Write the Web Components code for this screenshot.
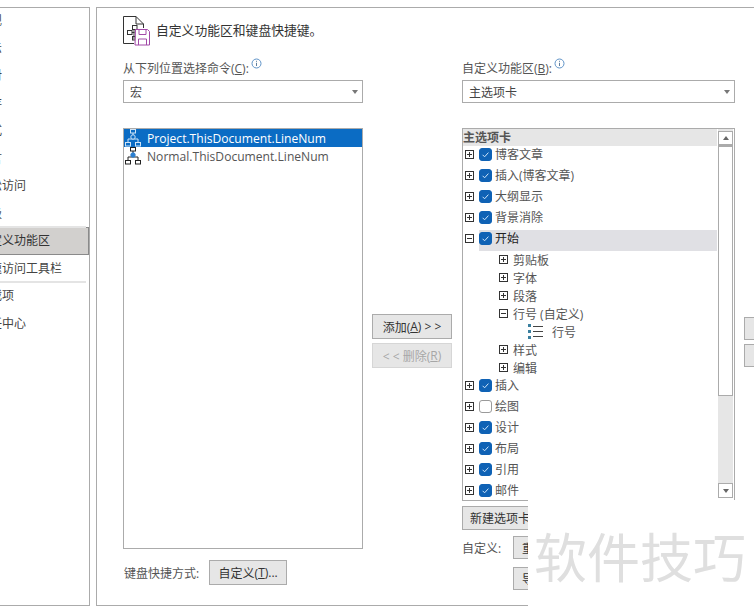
<!DOCTYPE html>
<html lang="zh">
<head>
<meta charset="utf-8">
<title>自定义功能区</title>
<style>
  html, body { margin: 0; height: 100%; background: #fff; overflow: hidden; }
  body { font: 12px "Open Sans", "Noto Sans CJK SC", sans-serif; color: #444; }
</style>
</head>
<body>
<options-dialog></options-dialog>

<script>
const FONT = `"Open Sans", "Noto Sans CJK SC", sans-serif`;

class OptionsNav extends HTMLElement {
  constructor() {
    super();
    this.attachShadow({ mode: 'open' }).innerHTML = `
      <style>
        :host { display: block; width: 112px; margin-left: -22px; box-sizing: border-box;
                border: 1px solid #ababab; border-left: 0; height: 599px; overflow: hidden; }
        .row { height: 27.5px; line-height: 27.5px; white-space: nowrap; color: #444; box-sizing: border-box; }
        .row.active { background: #d2d0ce; color: #333; outline: 1px solid #8a8a8a; outline-offset: -1px; }
        .sep { height: 2px; background: #e4e4e4; margin: -1px 3px -1px 0; position: relative; }
        .list { margin-top: -1px; }
      </style>
      <div class="list"></div>`;
    const items = ['常规', '显示', '校对', '保存', '版式', '语言', '轻松访问', '高级', '-', '自定义功能区', '快速访问工具栏', '-', '加载项', '信任中心'];
    const list = this.shadowRoot.querySelector('.list');
    items.forEach(txt => {
      const el = document.createElement('div');
      if (txt === '-') { el.className = 'sep'; list.append(el); return; }
      el.className = 'row' + (txt === '自定义功能区' ? ' active' : '');
      el.textContent = txt;
      list.append(el);
    });
  }
}

class InfoIcon extends HTMLElement {
  constructor() {
    super();
    this.attachShadow({ mode: 'open' }).innerHTML = `
      <style>:host { display: inline-block; width: 11px; height: 11px; vertical-align: 4px; margin-left: 2px; } svg { display: block; }</style>
      <svg width="11" height="11" viewBox="0 0 11 11" fill="none">
        <circle cx="5.5" cy="5.5" r="4.5" stroke="#5f93c8"/>
        <path d="M5.5 4.8V8" stroke="#5f7f9f"/>
        <path d="M5.5 2.8v1" stroke="#5f7f9f"/>
      </svg>`;
  }
}

class ComboBox extends HTMLElement {
  constructor() {
    super();
    this.attachShadow({ mode: 'open' }).innerHTML = `
      <style>
        :host { display: flex; align-items: center; height: 23px; box-sizing: border-box;
                border: 1px solid #ababab; background: #fff; padding: 0 4px 0 6px; color: #444; }
        .v { flex: 1; }
        i { width: 0; height: 0; border: 3.5px solid transparent; border-top: 4px solid #777; border-bottom: 0; }
      </style>
      <span class="v"><slot></slot></span><i></i>`;
  }
}

class PushButton extends HTMLElement {
  constructor() {
    super();
    this.attachShadow({ mode: 'open' }).innerHTML = `
      <style>
        :host { display: flex; align-items: center; justify-content: center; box-sizing: border-box; height: 25px;
                background: #e6e6e6; border: 1px solid #ababab; color: #333; white-space: nowrap; overflow: hidden; }
        :host([disabled]) { color: #a6a6a6; border-color: #d6d6d6; }
      </style>
      <slot></slot>`;
  }
}

class MacroRow extends HTMLElement {
  constructor() {
    super();
    const sel = this.hasAttribute('selected');
    const c = sel ? '#cfe4f7' : '#222';
    this.attachShadow({ mode: 'open' }).innerHTML = `
      <style>
        :host { display: flex; align-items: center; height: 18px; padding-left: 1px; color: #555; font-size: 12.1px; white-space: nowrap; }
        :host([selected]) { background: #0b6cc4; color: #fff; }
        svg { flex: none; margin-right: 6px; overflow: visible; }
      </style>
      <svg width="16" height="18" viewBox="0 0 16 18" fill="none">
        <rect x="5.5" y="0.5" width="5" height="3.5" stroke="${c}"/>
        <path d="M8 4v2M3 13v-3h10v3" stroke="${c}"/>
        <circle cx="8" cy="8" r="2.2" fill="${sel ? '#0b6cc4' : '#2b7fd0'}" stroke="${sel ? '#cfe4f7' : '#2b7fd0'}"/>
        <rect x="0.5" y="13.5" width="5" height="3.5" stroke="${c}"/>
        <rect x="10.5" y="13.5" width="5" height="3.5" stroke="${c}"/>
      </svg>
      <slot></slot>`;
  }
}

class TreeRow extends HTMLElement {
  constructor() {
    super();
    const kind = this.getAttribute('kind') || 'top';   // top | sub | leaf
    const exp = this.getAttribute('exp');              // plus | minus
    const chk = this.getAttribute('chk');              // on | off
    const box = exp ? `
      <svg class="exp" width="9" height="9" viewBox="0 0 9 9" fill="none">
        <rect x=".5" y=".5" width="8" height="8" stroke="#333"/>
        <path d="M2 4.5h5${exp === 'plus' ? 'M4.5 2v5' : ''}" stroke="#333"/>
      </svg>` : '';
    const check = chk === 'on' ? `
      <span class="chk on"><svg width="13" height="13" viewBox="0 0 13 13" fill="none"><path d="M3.6 6.8l2 2 3.8-4.2" stroke="#cfe6fb" stroke-width="1"/></svg></span>`
      : chk === 'off' ? `<span class="chk"></span>` : '';
    const leaf = kind === 'leaf' ? `
      <svg class="lines" width="16" height="15" viewBox="0 0 16 15">
        <path d="M0 0h3v3H0zM0 6h3v3H0zM0 12h3v3H0z" fill="#3a7f9f"/>
        <path d="M5 2.5h10M5 7.5h10M5 12.5h10" stroke="#444"/>
      </svg>` : '';
    this.attachShadow({ mode: 'open' }).innerHTML = `
      <style>
        :host { display: flex; align-items: center; height: 21px; white-space: nowrap; color: #555; }
        :host([kind=sub]), :host([kind=leaf]) { height: 18px; }
        :host([kind=sub]) { padding-left: 36px; }
        :host([kind=leaf]) { padding-left: 65px; }
        :host([kind=top]) { padding-left: 2px; }
        :host([active]) { color: #222; }
        .exp { flex: none; margin-right: 5px; }
        :host([kind=top]) .exp { margin-bottom: 5px; }
        :host([kind=sub]) .exp { margin-top: -2px; }
        .body { display: flex; align-items: center; flex: 1; height: 100%; box-sizing: border-box; }
        :host([kind=top]) .body { padding-bottom: 5px; }
        :host([active]) .body { background: #e0e0e4; }
        .chk { flex: none; width: 13px; height: 13px; border-radius: 3px; box-sizing: border-box;
               border: 1px solid #9a9a9a; background: #fff; margin-right: 3px; display: block; }
        .chk.on { background: #0f62b5; border-color: #0f62b5; }
        .chk svg { display: block; margin: -1px; }
        .lines { margin-right: 8px; margin-top: -2px; }
      </style>
      ${box}<div class="body">${check}${leaf}<span class="txt"><slot></slot></span></div>`;
  }
}

class RibbonTree extends HTMLElement {
  constructor() {
    super();
    this.attachShadow({ mode: 'open' }).innerHTML = `
      <style>
        :host { display: block; box-sizing: border-box; height: 373px; border: 1px solid #ababab; background: #fff; overflow: hidden; }
        .wrap { display: grid; grid-template-columns: 1fr 15px; height: 100%; column-gap: 1px; padding-right: 1px; box-sizing: border-box; }
        .items { overflow: hidden; }
        .head { height: 17px; line-height: 17px; background: #e6e6e6; color: #555; font-weight: 600; }
        .bar { background: #e6e6e6; display: flex; flex-direction: column; padding-top: 2px; box-sizing: border-box; height: 369px; }
        .btn { height: 15px; box-sizing: border-box; border: 1px solid #ababab; background: #fff; display: flex; align-items: center; justify-content: center; flex: none; }
        .up { border-width: 1px 1px 2px; }
        .thumb { height: 250px; background: #fff; border: 1px solid #ababab; box-sizing: border-box; flex: none; }
        .sp { flex: 1; }
        i { width: 0; height: 0; border: 3.5px solid transparent; }
        .up i { border-bottom: 4px solid #666; border-top: 0; }
        .dn i { border-top: 4px solid #666; border-bottom: 0; }
      </style>
      <div class="wrap">
        <div class="items">
          <div class="head">主选项卡</div>
          <div class="rows"><slot></slot></div>
        </div>
        <div class="bar">
          <div class="btn up"><i></i></div>
          <div class="thumb"></div>
          <div class="sp"></div>
          <div class="btn dn"><i></i></div>
        </div>
      </div>`;
  }
}

class HeaderIcon extends HTMLElement {
  constructor() {
    super();
    this.attachShadow({ mode: 'open' }).innerHTML = `
      <style>:host { display: block; width: 28px; height: 30px; flex: none; } svg { display: block; }</style>
      <svg width="28" height="30" viewBox="0 0 28 30" fill="none">
        <path d="M11 27.5H.5V.5H13L20.5 8v4" stroke="#333"/>
        <path d="M13 .5V8h7.5" stroke="#333"/>
        <rect x="9.5" y="9.5" width="4.5" height="4" stroke="#333"/>
        <rect x="4.5" y="14.5" width="4.5" height="4" stroke="#333"/>
        <rect x="9.5" y="20.5" width="3" height="3.5" stroke="#333"/>
        <path d="M9 16.5h2.5M11 13.5v10" stroke="#333"/>
        <path d="M12.5 13.5h12l2 2v13.5h-14.5z" fill="#fff" stroke="#a24aa8"/>
        <path d="M16 13.5v5h7v-5M15.5 29v-6h8v6" stroke="#a24aa8"/>
      </svg>`;
  }
}

class WatermarkPatch extends HTMLElement {
  constructor() {
    super();
    this.attachShadow({ mode: 'open' }).innerHTML = `
      <style>
        :host { position: absolute; left: 528px; top: 500px; width: 226px; height: 112px; background: #fff; display: block; overflow: hidden; }
        div { position: absolute; left: 6px; top: 15px; font: 53px/80px "Noto Sans CJK SC", sans-serif; color: #dfdfdf; white-space: nowrap; }
      </style>
      <div>软件技巧</div>`;
  }
}

const tpl = document.createElement('template');
tpl.innerHTML = `
  <style>
    :host { display: flex; position: relative; width: 754px; height: 612px; overflow: hidden; background: #fff;
            padding-top: 7px; box-sizing: border-box; font-family: ${FONT}; font-size: 12px; color: #444; }
    options-nav { flex: none; }
    .panel { flex: none; margin-left: 6px; width: 720px; height: 599px; box-sizing: border-box; border: 1px solid #ababab; border-right: 0;
             padding: 8px 0 0 26px; overflow: hidden; }
    .title { display: flex; align-items: center; gap: 5px; height: 30px; color: #333; font-size: 12.8px; margin-bottom: 12px; }
    .title span { padding-bottom: 3px; }
    .cols { display: grid; grid-template-columns: 240px 81px 273px 40px; column-gap: 9px; }
    .col { display: flex; flex-direction: column; }
    .lbl { height: 22px; line-height: 18px; white-space: nowrap; color: #555; }
    .gap { height: 25px; }
    .list { height: 421px; box-sizing: border-box; border: 1px solid #ababab; background: #fff; }
    .foot { display: flex; align-items: center; margin-top: 11px; gap: 10px; padding-left: 1px; color: #555; }
    .foot push-button { width: 78px; }
    .mid { padding-top: 256px; gap: 4px; }
    .mid push-button { width: 80px; }
    .new { margin-top: 5px; height: 24px; width: 67px; justify-content: flex-start; padding-left: 7px; }
    .ctl { display: grid; grid-template-columns: 51px 16px; margin-top: 6px; align-items: center; row-gap: 8px; color: #555; }
    .ctl push-button { height: 23px; justify-content: flex-start; padding-left: 8px; }
    .side { padding-top: 259px; gap: 4px; }
    .side push-button { height: 23px; width: 40px; }
    u { text-underline-offset: 1px; }
  </style>
  <options-nav></options-nav>
  <section class="panel">
    <div class="title"><header-icon></header-icon><span>自定义功能区和键盘快捷键。</span></div>
    <div class="cols">
      <div class="col">
        <div class="lbl">从下列位置选择命令(<u>C</u>):<info-icon></info-icon></div>
        <combo-box>宏</combo-box>
        <div class="gap"></div>
        <div class="list">
          <macro-row selected>Project.ThisDocument.LineNum</macro-row>
          <macro-row>Normal.ThisDocument.LineNum</macro-row>
        </div>
        <div class="foot"><span>键盘快捷方式:</span><push-button>自定义(<u>T</u>)...</push-button></div>
      </div>
      <div class="col mid">
        <push-button>添加(<u>A</u>) &gt; &gt;</push-button>
        <push-button disabled>&lt; &lt; 删除(<u>R</u>)</push-button>
      </div>
      <div class="col">
        <div class="lbl">自定义功能区(<u>B</u>):<info-icon></info-icon></div>
        <combo-box>主选项卡</combo-box>
        <div class="gap"></div>
        <ribbon-tree>
          <tree-row kind="top" exp="plus" chk="on">博客文章</tree-row>
          <tree-row kind="top" exp="plus" chk="on">插入(博客文章)</tree-row>
          <tree-row kind="top" exp="plus" chk="on">大纲显示</tree-row>
          <tree-row kind="top" exp="plus" chk="on">背景消除</tree-row>
          <tree-row kind="top" exp="minus" chk="on" active>开始</tree-row>
          <tree-row kind="sub" exp="plus">剪贴板</tree-row>
          <tree-row kind="sub" exp="plus">字体</tree-row>
          <tree-row kind="sub" exp="plus">段落</tree-row>
          <tree-row kind="sub" exp="minus">行号 (自定义)</tree-row>
          <tree-row kind="leaf">行号</tree-row>
          <tree-row kind="sub" exp="plus">样式</tree-row>
          <tree-row kind="sub" exp="plus">编辑</tree-row>
          <tree-row kind="top" exp="plus" chk="on">插入</tree-row>
          <tree-row kind="top" exp="plus" chk="off">绘图</tree-row>
          <tree-row kind="top" exp="plus" chk="on">设计</tree-row>
          <tree-row kind="top" exp="plus" chk="on">布局</tree-row>
          <tree-row kind="top" exp="plus" chk="on">引用</tree-row>
          <tree-row kind="top" exp="plus" chk="on">邮件</tree-row>
        </ribbon-tree>
        <push-button class="new">新建选项卡</push-button>
        <div class="ctl">
          <span>自定义:</span><push-button>重</push-button>
          <span></span><push-button>导</push-button>
        </div>
      </div>
      <div class="col side">
        <push-button></push-button>
        <push-button></push-button>
      </div>
    </div>
  </section>
  <watermark-patch></watermark-patch>
`;

class OptionsDialog extends HTMLElement {
  constructor() {
    super();
    this.attachShadow({ mode: 'open' }).appendChild(tpl.content.cloneNode(true));
  }
}

customElements.define('options-nav', OptionsNav);
customElements.define('info-icon', InfoIcon);
customElements.define('combo-box', ComboBox);
customElements.define('push-button', PushButton);
customElements.define('macro-row', MacroRow);
customElements.define('tree-row', TreeRow);
customElements.define('ribbon-tree', RibbonTree);
customElements.define('header-icon', HeaderIcon);
customElements.define('watermark-patch', WatermarkPatch);
customElements.define('options-dialog', OptionsDialog);
</script>
</body>
</html>
